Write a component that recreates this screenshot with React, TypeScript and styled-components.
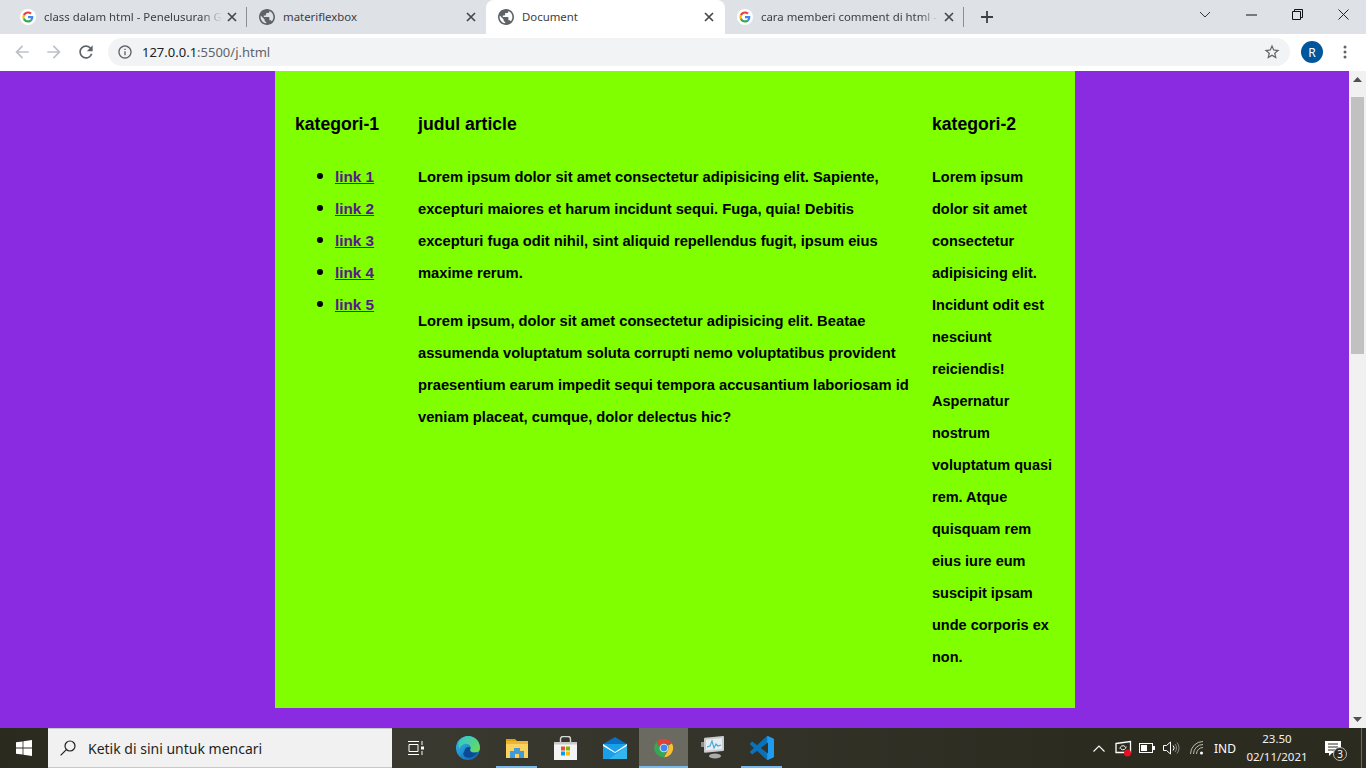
import React from 'react';
import styled, { createGlobalStyle } from 'styled-components';

const GlobalStyle = createGlobalStyle`
  html, body {
    margin: 0;
    padding: 0;
    height: 100%;
    overflow: hidden;
  }
`;

const Screen = styled.div`
  width: 1366px;
  height: 768px;
  display: flex;
  flex-direction: column;
  overflow: hidden;
  font-family: "Noto Sans", "Open Sans", sans-serif;
`;

/* ---- browser tabs ---- */
const TabStrip = styled.div`
  height: 34px;
  padding: 0 0 0 8px;
  flex: none;
  display: flex;
  background: #dee1e6;
`;

const Tab = styled.div<{ $active?: boolean; $divider?: boolean }>`
  width: 239px;
  height: ${({ $active }) => ($active ? '38px' : '34px')};
  box-sizing: border-box;
  padding: ${({ $active }) => ($active ? '0 8px 4px 12px' : '0 7px 0 12px')};
  flex: none;
  display: flex;
  align-items: center;
  gap: 8px;
  background: ${({ $active }) => ($active ? '#ffffff' : 'transparent')};
  border-radius: 8px 8px 0 0;
  position: relative;
  z-index: ${({ $active }) => ($active ? 1 : 0)};
  &::after {
    content: '';
    display: ${({ $divider }) => ($divider ? 'block' : 'none')};
    position: absolute;
    right: 0;
    top: 7px;
    width: 1px;
    height: 20px;
    background: #8b8e92;
  }
`;

const TabTitle = styled.span<{ $fade?: boolean }>`
  flex: 1;
  min-width: 0;
  margin-right: -6px;
  padding-bottom: 1px;
  overflow: hidden;
  white-space: nowrap;
  font-size: 11.4px;
  color: #3c4043;
  mask-image: ${({ $fade }) => ($fade ? 'linear-gradient(to right, #000 158px, transparent 100%)' : 'none')};
`;

const NewTab = styled.div`
  width: 46px;
  height: 34px;
  display: flex;
  align-items: center;
  justify-content: center;
`;

const WindowControls = styled.div`
  margin-left: auto;
  display: flex;
  height: 34px;
`;

const WindowButton = styled.div`
  width: 46px;
  height: 29px;
  display: flex;
  align-items: center;
  justify-content: center;
`;

/* ---- address bar ---- */
const Toolbar = styled.div`
  height: 37px;
  flex: none;
  box-sizing: border-box;
  padding: 4px 0 5px 6px;
  display: flex;
  align-items: center;
  background: #ffffff;
`;

const NavButton = styled.div`
  width: 32px;
  display: flex;
  justify-content: center;
`;

const Omnibox = styled.div`
  width: 1182px;
  height: 28px;
  margin-left: 6px;
  box-sizing: border-box;
  padding: 0 9px;
  display: flex;
  align-items: center;
  background: #f1f3f4;
  border-radius: 14px;
`;

const Url = styled.div`
  margin-left: 9px;
  flex: 1;
  font-size: 13px;
  color: #5f6368;
`;

const Host = styled.span`
  color: #202124;
`;

const Avatar = styled.div`
  width: 22px;
  height: 22px;
  margin-left: 11px;
  border-radius: 50%;
  background: #01579b;
  color: #ffffff;
  font-size: 12px;
  display: flex;
  align-items: center;
  justify-content: center;
`;

const Kebab = styled.div`
  width: 16px;
  margin-left: 14px;
  display: flex;
  justify-content: center;
`;

/* ---- page viewport ---- */
const Viewport = styled.div`
  flex: 1;
  min-height: 0;
  display: flex;
  background: blueviolet;
`;

const PageArea = styled.div`
  flex: 1;
  display: flex;
  justify-content: center;
  align-items: flex-start;
  padding-left: 1px;
`;

const Container = styled.div`
  width: 800px;
  height: 637px;
  display: flex;
  background: chartreuse;
  color: #000000;
  font-family: "Liberation Sans", Arial, sans-serif;
  font-weight: 700;
  font-size: 14.72px;
  line-height: 32px;
`;

const Column = styled.div<{ $width: number }>`
  width: ${({ $width }) => $width}px;
  flex: none;
  box-sizing: border-box;
  padding: 37px 0 0 20px;
`;

const Heading = styled.h3`
  margin: 0 0 21px;
  font-size: 17.6px;
  line-height: 32px;
  font-weight: 700;
  white-space: nowrap;
`;

const LinkList = styled.ul`
  margin: 0;
  padding: 0 0 0 40px;
  list-style: none;
`;

const LinkItem = styled.li`
  position: relative;
  white-space: nowrap;
  &::before {
    content: '';
    position: absolute;
    left: -18px;
    top: 12px;
    width: 6px;
    height: 6px;
    border-radius: 50%;
    background: #000000;
  }
`;

const PageLink = styled.a`
  color: #551a8b;
  font-size: 15.3px;
  text-decoration: underline;
`;

const Paragraph = styled.p`
  margin: 0 0 16px;
  white-space: nowrap;
`;

const SideParagraph = styled(Paragraph)`
  font-size: 14.5px;
`;

/* ---- scrollbar ---- */
const Scrollbar = styled.div`
  width: 17px;
  flex: none;
  display: flex;
  flex-direction: column;
  align-items: center;
  background: #f1f1f1;
`;

const ScrollArrow = styled.div<{ $down?: boolean }>`
  height: 17px;
  width: 17px;
  margin-top: ${({ $down }) => ($down ? 'auto' : '0')};
  display: flex;
  align-items: center;
  justify-content: center;
`;

const ScrollThumb = styled.div`
  width: 13px;
  height: 257px;
  margin-top: 9px;
  background: #c1c1c1;
`;

/* ---- windows taskbar ---- */
const Taskbar = styled.div`
  height: 40px;
  flex: none;
  display: flex;
  align-items: stretch;
  background: linear-gradient(90deg, #2b2a1f 0, #3a392f 30%, #35342a 50%, #2c2b20 80%);
  color: #ffffff;
`;

const StartButton = styled.div`
  width: 48px;
  display: flex;
  align-items: center;
  justify-content: center;
`;

const SearchBox = styled.div`
  width: 344px;
  box-sizing: border-box;
  padding-left: 12px;
  display: flex;
  align-items: center;
  gap: 12px;
  background: #f1f1f1;
  border: 1px solid #c9c9c9;
  border-width: 1px 0 1px 0;
  font-size: 14px;
  color: #1f1f1f;
`;

const TaskSlot = styled.div<{ $width?: number; $active?: boolean; $open?: boolean }>`
  width: ${({ $width }) => $width ?? 49}px;
  flex: none;
  box-sizing: border-box;
  position: relative;
  display: flex;
  align-items: center;
  justify-content: center;
  background: ${({ $active }) => ($active ? '#6b6a61' : 'transparent')};
  &::after {
    content: '';
    display: ${({ $open }) => ($open ? 'block' : 'none')};
    position: absolute;
    left: ${({ $active }) => ($active ? '0' : '4px')};
    right: ${({ $active }) => ($active ? '0' : '4px')};
    bottom: 0;
    height: 2px;
    background: #76b9ed;
  }
`;

const TaskViewSlot = styled(TaskSlot)`
  padding-right: 3px;
`;

const Tray = styled.div`
  margin-left: auto;
  display: flex;
  align-items: center;
  font-size: 12px;
`;

const TraySlot = styled.div<{ $width: number }>`
  width: ${({ $width }) => $width}px;
  display: flex;
  align-items: center;
  justify-content: center;
`;

const DesktopEdge = styled.div`
  width: 15px;
  height: 40px;
  box-sizing: border-box;
  display: flex;
  justify-content: flex-end;
  padding-right: 4px;
`;

const EdgeLine = styled.div`
  width: 1px;
  height: 40px;
  background: #6a6a62;
`;

const Clock = styled.div`
  width: 76px;
  text-align: center;
  font-size: 11.5px;
  line-height: 18px;
  color: #f2f2f2;
`;

const NotifyBadge = styled.div`
  position: absolute;
  right: -6px;
  bottom: -5px;
  width: 14px;
  height: 14px;
  box-sizing: border-box;
  border: 1px solid #b9b9b9;
  border-radius: 50%;
  background: #2c2b21;
  color: #ffffff;
  font-size: 10px;
  line-height: 12px;
  text-align: center;
`;

const NotifyWrap = styled.div`
  position: relative;
  display: flex;
`;

const GoogleIcon = () => (
  <svg width="16" height="16" viewBox="0 0 16 16" style={{ flex: 'none' }}>
    <circle cx="8" cy="8" r="8" fill="#fff" />
    <g transform="translate(2.4 2.4) scale(0.233)">
      <path fill="#EA4335" d="M24 9.5c3.54 0 6.71 1.22 9.21 3.6l6.85-6.85C35.9 2.38 30.47 0 24 0 14.62 0 6.51 5.38 2.56 13.22l7.98 6.19C12.43 13.72 17.74 9.5 24 9.5z" />
      <path fill="#4285F4" d="M46.98 24.55c0-1.57-.15-3.09-.38-4.55H24v9.02h12.94c-.58 2.96-2.26 5.48-4.78 7.18l7.73 6c4.51-4.18 7.09-10.36 7.09-17.65z" />
      <path fill="#FBBC05" d="M10.53 28.59c-.48-1.45-.76-2.99-.76-4.59s.27-3.14.76-4.59l-7.98-6.19C.92 16.46 0 20.12 0 24c0 3.88.92 7.54 2.56 10.78l7.97-6.19z" />
      <path fill="#34A853" d="M24 48c6.48 0 11.93-2.13 15.89-5.81l-7.73-6c-2.15 1.45-4.92 2.3-8.16 2.3-6.26 0-11.57-4.22-13.47-9.91l-7.98 6.19C6.51 42.62 14.62 48 24 48z" />
    </g>
  </svg>
);

const GlobeIcon = () => (
  <svg width="16" height="16" viewBox="2 2 20 20" fill="#5f6368" style={{ flex: 'none' }}>
    <path d="M12 2C6.48 2 2 6.48 2 12s4.48 10 10 10 10-4.48 10-10S17.52 2 12 2zm-1 17.93c-3.95-.49-7-3.85-7-7.93 0-.62.08-1.21.21-1.79L9 15v1c0 1.1.9 2 2 2v1.93zm6.9-2.54c-.26-.81-1-1.39-1.9-1.39h-1v-3c0-.55-.45-1-1-1H8v-2h2c.55 0 1-.45 1-1V7h2c1.1 0 2-.9 2-2v-.41c2.93 1.19 5 4.06 5 7.41 0 2.08-.8 3.97-2.1 5.39z" />
  </svg>
);

const CloseIcon = () => (
  <svg width="16" height="16" viewBox="0 0 16 16" style={{ flex: 'none' }}>
    <path d="M4 4l8 8M12 4l-8 8" stroke="#45484c" strokeWidth="1.7" />
  </svg>
);

const MaterialIcon = ({ d, fill, size = 20 }: { d: string; fill: string; size?: number }) => (
  <svg width={size} height={size} viewBox="0 0 24 24" fill={fill} style={{ flex: 'none' }}>
    <path d={d} />
  </svg>
);

const BACK = 'M20 11H7.83l5.59-5.59L12 4l-8 8 8 8 1.41-1.41L7.83 13H20v-2z';
const FORWARD = 'M4 11h12.17l-5.59-5.59L12 4l8 8-8 8-1.41-1.41L16.17 13H4v-2z';
const RELOAD = 'M17.65 6.35A7.958 7.958 0 0 0 12 4c-4.42 0-7.99 3.58-7.99 8s3.57 8 7.99 8c3.73 0 6.84-2.55 7.73-6h-2.08A5.99 5.99 0 0 1 12 18c-3.31 0-6-2.69-6-6s2.69-6 6-6c1.66 0 3.14.69 4.22 1.78L13 11h7V4l-2.35 2.35z';
const INFO = 'M11 7h2v2h-2zm0 4h2v6h-2zm1-9C6.48 2 2 6.48 2 12s4.48 10 10 10 10-4.48 10-10S17.52 2 12 2zm0 18c-4.41 0-8-3.59-8-8s3.59-8 8-8 8 3.59 8 8-3.59 8-8 8z';
const STAR = 'M22 9.24l-7.19-.62L12 2 9.19 8.63 2 9.24l5.46 4.73L5.82 21 12 17.27 18.18 21l-1.63-7.03L22 9.24zM12 15.4l-3.76 2.27 1-4.28-3.32-2.88 4.38-.38L12 6.1l1.71 4.04 4.38.38-3.32 2.88 1 4.28L12 15.4z';
const VSCODE = 'M23.15 2.587L18.21.21a1.494 1.494 0 0 0-1.705.29l-9.46 8.63-4.12-3.128a.999.999 0 0 0-1.276.057L.327 7.261A1 1 0 0 0 .326 8.74L3.899 12 .326 15.26a1 1 0 0 0 .001 1.479L1.65 17.94a.999.999 0 0 0 1.276.057l4.12-3.128 9.46 8.63a1.492 1.492 0 0 0 1.704.29l4.942-2.377A1.5 1.5 0 0 0 24 20.06V3.939a1.5 1.5 0 0 0-.85-1.352zm-5.146 14.861L10.826 12l7.178-5.448v10.896z';

const EdgeIcon = () => (
  <svg width="24" height="24" viewBox="0 0 24 24">
    <defs>
      <linearGradient id="edgeA" x1="0" y1="0" x2="1" y2="1">
        <stop offset="0" stopColor="#35c1f1" />
        <stop offset="1" stopColor="#0c59a4" />
      </linearGradient>
      <linearGradient id="edgeB" x1="0" y1="0" x2="1" y2="1">
        <stop offset="0" stopColor="#2fc6d8" />
        <stop offset="1" stopColor="#6fdc4d" />
      </linearGradient>
    </defs>
    <circle cx="12" cy="12" r="12" fill="url(#edgeA)" />
    <path d="M3 6.5C5 2.5 8.5 0 12 0c7 0 12 5 12 12 0 3-2 4.5-5 4.5-3 0-5-1-5-2.5 1-1 1.2-2 .7-3.2C13.5 8.5 11 7.4 8.5 8 6 8.5 4 10.5 3.2 13 2.6 11 2.4 8.5 3 6.5z" fill="url(#edgeB)" />
    <path d="M8.2 16c0-3 2-5 4.5-5 1.2 0 1.8.7 1.3 2.4-.3 2 2 3.4 4 3.4 1.5 0 2.6-.4 3.6-1-1.7 3.6-5 6-9 6-3 0-5-1.5-5.3-3.6-.1-.8.2-1.7.9-2.2z" fill="#0b4a94" />
  </svg>
);

const ExplorerIcon = () => (
  <svg width="22" height="20" viewBox="0 0 22 20">
    <path d="M0 1h9l2 2h-11z" fill="#e0a100" />
    <rect x="0" y="3" width="22" height="4" fill="#e9b53a" />
    <rect x="0" y="6" width="22" height="14" fill="#fbd25f" />
    <path d="M4 20v-7h4v-3h6v3h4v7h-5v-4h-4v4z" fill="#3f9bdc" />
  </svg>
);

const StoreIcon = () => (
  <svg width="23" height="24" viewBox="0 0 23 24">
    <path d="M6.5 6V3a2.5 2.5 0 0 1 2.5-2.5h5A2.5 2.5 0 0 1 16.5 3v3" fill="none" stroke="#d8d8d8" strokeWidth="1.4" />
    <rect x="0" y="6" width="23" height="18" fill="#f4f4f4" />
    <rect x="0" y="6" width="23" height="2.5" fill="#c9c9c9" />
    <rect x="7" y="10.5" width="4" height="4" fill="#e8532a" />
    <rect x="12" y="10.5" width="4" height="4" fill="#7eb900" />
    <rect x="7" y="15.5" width="4" height="4" fill="#00a1ef" />
    <rect x="12" y="15.5" width="4" height="4" fill="#ffb900" />
  </svg>
);

const MailIcon = () => (
  <svg width="24" height="22" viewBox="0 0 24 22">
    <path d="M0 7L12 0l12 7v1L12 15 0 8z" fill="#0a6fc2" />
    <rect x="0" y="7" width="24" height="15" fill="#1aa0e8" />
    <path d="M0 7l12 8 12-8v2L12 16 0 9z" fill="#ffffff" />
    <path d="M24 9v13H6z" fill="#33b5f0" />
  </svg>
);

const ChromeIcon = () => (
  <svg width="22" height="22" viewBox="0 0 48 48">
    <path d="M24 4a20 20 0 0 1 17.3 10H24a10 10 0 0 0-9.4 6.6L7.6 10.9A20 20 0 0 1 24 4z" fill="#db4437" />
    <path d="M41.3 14A20 20 0 0 1 24 44l8.6-15a10 10 0 0 0 .4-10.5L41.3 14z" fill="#fbc02d" />
    <path d="M24 44A20 20 0 0 1 7.6 10.9l8.7 15a10 10 0 0 0 11.6 7.5z" fill="#34a853" />
    <circle cx="24" cy="24" r="9.5" fill="#f5f5f5" />
    <circle cx="24" cy="24" r="7.5" fill="#4285f4" />
  </svg>
);

const MonitorIcon = () => (
  <svg width="24" height="24" viewBox="0 0 24 24">
    <rect x="3" y="2" width="20" height="15" rx="1" fill="#c8ccce" transform="skewY(-5)" />
    <rect x="5" y="4" width="16" height="11" fill="#e6ecef" transform="skewY(-5)" />
    <path d="M6 11l3-1 2-5 2 7 2-4 2 2 3-1" fill="none" stroke="#49a6d6" strokeWidth="1.1" />
    <ellipse cx="14" cy="20" rx="6" ry="2.5" fill="#a8acad" />
    <rect x="0" y="6" width="3" height="5" fill="#8d9091" />
  </svg>
);

const VsCodeIcon = () => (
  <svg width="24" height="24" viewBox="0 0 24 24">
    <defs>
      <clipPath id="vsRight">
        <rect x="17.2" y="0" width="7" height="24" />
      </clipPath>
    </defs>
    <path d={VSCODE} fill="#0a72b8" />
    <path d={VSCODE} fill="#1f9cf0" clipPath="url(#vsRight)" />
  </svg>
);

// titles stop where the strip fades them out in the tab
const tabs = [
  { title: 'class dalam html - Penelusuran G', google: true, fade: true, divider: true },
  { title: 'materiflexbox', google: false },
  { title: 'Document', google: false, active: true },
  { title: 'cara memberi comment di html -', google: true, fade: true, divider: true },
];

const links = ['link 1', 'link 2', 'link 3', 'link 4', 'link 5'];

const article = [
  [
    'Lorem ipsum dolor sit amet consectetur adipisicing elit. Sapiente,',
    'excepturi maiores et harum incidunt sequi. Fuga, quia! Debitis',
    'excepturi fuga odit nihil, sint aliquid repellendus fugit, ipsum eius',
    'maxime rerum.',
  ],
  [
    'Lorem ipsum, dolor sit amet consectetur adipisicing elit. Beatae',
    'assumenda voluptatum soluta corrupti nemo voluptatibus provident',
    'praesentium earum impedit sequi tempora accusantium laboriosam id',
    'veniam placeat, cumque, dolor delectus hic?',
  ],
];

const sideText = [
  'Lorem ipsum', 'dolor sit amet', 'consectetur', 'adipisicing elit.', 'Incidunt odit est',
  'nesciunt', 'reiciendis!', 'Aspernatur', 'nostrum', 'voluptatum quasi', 'rem. Atque',
  'quisquam rem', 'eius iure eum', 'suscipit ipsam', 'unde corporis ex', 'non.',
];

const Lines = ({ lines }: { lines: string[] }) => (
  <>
    {lines.map((line, i) => (
      <React.Fragment key={i}>
        {line}
        {i < lines.length - 1 && <br />}
      </React.Fragment>
    ))}
  </>
);

const App: React.FC = () => (
  <Screen>
    <GlobalStyle />
    <TabStrip>
      {tabs.map((tab) => (
        <Tab key={tab.title} $active={tab.active} $divider={tab.divider}>
          {tab.google ? <GoogleIcon /> : <GlobeIcon />}
          <TabTitle $fade={tab.fade}>{tab.title}</TabTitle>
          <CloseIcon />
        </Tab>
      ))}
      <NewTab>
        <svg width="14" height="14" viewBox="0 0 14 14">
          <path d="M7 1v12M1 7h12" stroke="#3c4043" strokeWidth="1.8" />
        </svg>
      </NewTab>
      <WindowControls>
        <WindowButton>
          <svg width="12" height="8" viewBox="0 0 12 8"><path d="M1 1l5 5 5-5" fill="none" stroke="#333" /></svg>
        </WindowButton>
        <WindowButton>
          <svg width="11" height="2" viewBox="0 0 11 2"><path d="M0 1h11" stroke="#111" /></svg>
        </WindowButton>
        <WindowButton>
          <svg width="11" height="11" viewBox="0 0 11 11"><path d="M.5 2.5h8v8h-8zM2.5 2.5v-2h8v8h-2" fill="none" stroke="#111" /></svg>
        </WindowButton>
        <WindowButton>
          <svg width="11" height="11" viewBox="0 0 11 11"><path d="M.5.5l10 10M10.5.5l-10 10" stroke="#222" /></svg>
        </WindowButton>
      </WindowControls>
    </TabStrip>

    <Toolbar>
      <NavButton><MaterialIcon d={BACK} fill="#bdc1c6" /></NavButton>
      <NavButton><MaterialIcon d={FORWARD} fill="#bdc1c6" /></NavButton>
      <NavButton><MaterialIcon d={RELOAD} fill="#5f6368" /></NavButton>
      <Omnibox>
        <MaterialIcon d={INFO} fill="#5f6368" size={16} />
        <Url><Host>127.0.0.1</Host>:5500/j.html</Url>
        <MaterialIcon d={STAR} fill="#5f6368" size={18} />
      </Omnibox>
      <Avatar>R</Avatar>
      <Kebab>
        <svg width="4" height="14" viewBox="0 0 4 14" fill="#5f6368">
          <circle cx="2" cy="2" r="1.5" /><circle cx="2" cy="7" r="1.5" /><circle cx="2" cy="12" r="1.5" />
        </svg>
      </Kebab>
    </Toolbar>

    <Viewport>
      <PageArea>
        <Container>
          <Column $width={123}>
            <Heading>kategori-1</Heading>
            <LinkList>
              {links.map((link) => (
                <LinkItem key={link}><PageLink href="#">{link}</PageLink></LinkItem>
              ))}
            </LinkList>
          </Column>
          <Column $width={514}>
            <Heading>judul article</Heading>
            {article.map((lines) => (
              <Paragraph key={lines[0]}><Lines lines={lines} /></Paragraph>
            ))}
          </Column>
          <Column $width={163}>
            <Heading>kategori-2</Heading>
            <SideParagraph><Lines lines={sideText} /></SideParagraph>
          </Column>
        </Container>
      </PageArea>
      <Scrollbar>
        <ScrollArrow>
          <svg width="9" height="5" viewBox="0 0 9 5"><path d="M4.5 0L9 5H0z" fill="#505050" /></svg>
        </ScrollArrow>
        <ScrollThumb />
        <ScrollArrow $down>
          <svg width="9" height="5" viewBox="0 0 9 5"><path d="M0 0h9L4.5 5z" fill="#505050" /></svg>
        </ScrollArrow>
      </Scrollbar>
    </Viewport>

    <Taskbar>
      <StartButton>
        <svg width="16" height="16" viewBox="0 0 16 16" fill="#ffffff">
          <path d="M0 2.3l6.6-.9v6.2H0zM7.4 1.3L16 0v7.6H7.4zM0 8.4h6.6v6.2L0 13.7zM7.4 8.4H16V16l-8.6-1.3z" />
        </svg>
      </StartButton>
      <SearchBox>
        <svg width="16" height="16" viewBox="0 0 16 16" fill="none" stroke="#1f1f1f" strokeWidth="1.2">
          <circle cx="10" cy="6" r="5" />
          <path d="M6.4 9.6L.6 15.4" />
        </svg>
        Ketik di sini untuk mencari
      </SearchBox>
      <TaskViewSlot $width={51}>
        <svg width="16" height="16" viewBox="0 0 16 16" fill="none" stroke="#ffffff">
          <path d="M0 1.5h11M0 14.5h11M1 4.5h9v7H1z" />
          <path d="M14 1v4M14 11v4" />
          <rect x="13" y="6.5" width="3" height="3" fill="#ffffff" stroke="none" />
        </svg>
      </TaskViewSlot>
      <TaskSlot><EdgeIcon /></TaskSlot>
      <TaskSlot $open><ExplorerIcon /></TaskSlot>
      <TaskSlot><StoreIcon /></TaskSlot>
      <TaskSlot><MailIcon /></TaskSlot>
      <TaskSlot $active $open><ChromeIcon /></TaskSlot>
      <TaskSlot><MonitorIcon /></TaskSlot>
      <TaskSlot $open><VsCodeIcon /></TaskSlot>
      <Tray>
        <TraySlot $width={24}>
          <svg width="12" height="7" viewBox="0 0 12 7"><path d="M.5 6.5L6 1l5.5 5.5" fill="none" stroke="#fff" strokeWidth="1.1" /></svg>
        </TraySlot>
        <TraySlot $width={24}>
          <svg width="17" height="17" viewBox="0 0 17 17" fill="none">
            <path d="M1 3.5L15.5 1.5v11H1z" stroke="#fff" strokeWidth="1.3" />
            <path d="M5 9a3 3 0 0 1 5-2.5M11 6.5a3 3 0 0 1-5 2.5" stroke="#fff" />
            <circle cx="12.5" cy="13" r="3.5" fill="#e81123" />
          </svg>
        </TraySlot>
        <TraySlot $width={24}>
          <svg width="16" height="10" viewBox="0 0 16 10">
            <rect x=".5" y=".5" width="13" height="9" fill="none" stroke="#fff" />
            <rect x="2" y="2" width="6" height="6" fill="#fff" />
            <rect x="14" y="3" width="2" height="4" fill="#fff" />
          </svg>
        </TraySlot>
        <TraySlot $width={24}>
          <svg width="17" height="14" viewBox="0 0 17 14" fill="none" stroke="#fff">
            <path d="M.5 4.5h3l4-3.5v12l-4-3.5h-3z" />
            <path d="M10 4.5a3.5 3.5 0 0 1 0 5" />
            <path d="M12 3a6 6 0 0 1 0 8M14 1.5a8.5 8.5 0 0 1 0 11" stroke="#8a8a86" />
          </svg>
        </TraySlot>
        <TraySlot $width={28}>
          <svg width="15" height="14" viewBox="0 0 15 14" fill="none" stroke="#bdbdb8">
            <path d="M.5 13A12.5 12.5 0 0 1 13 .5M3.5 13A9.5 9.5 0 0 1 13 3.5M6.5 13A6.5 6.5 0 0 1 13 6.5" />
            <circle cx="11.5" cy="12" r="1.5" fill="#fff" stroke="none" />
          </svg>
        </TraySlot>
        <TraySlot $width={28}>IND</TraySlot>
        <Clock>23.50<br />02/11/2021</Clock>
        <TraySlot $width={36}>
          <NotifyWrap>
            <svg width="16" height="15" viewBox="0 0 16 15">
              <path d="M0 0h16v12H7l-3 3v-3H0z" fill="#fff" />
              <path d="M3 3h10M3 6h10M3 9h7" stroke="#2c2b21" />
            </svg>
            <NotifyBadge>3</NotifyBadge>
          </NotifyWrap>
        </TraySlot>
        <DesktopEdge><EdgeLine /></DesktopEdge>
      </Tray>
    </Taskbar>
  </Screen>
);

export default App;
